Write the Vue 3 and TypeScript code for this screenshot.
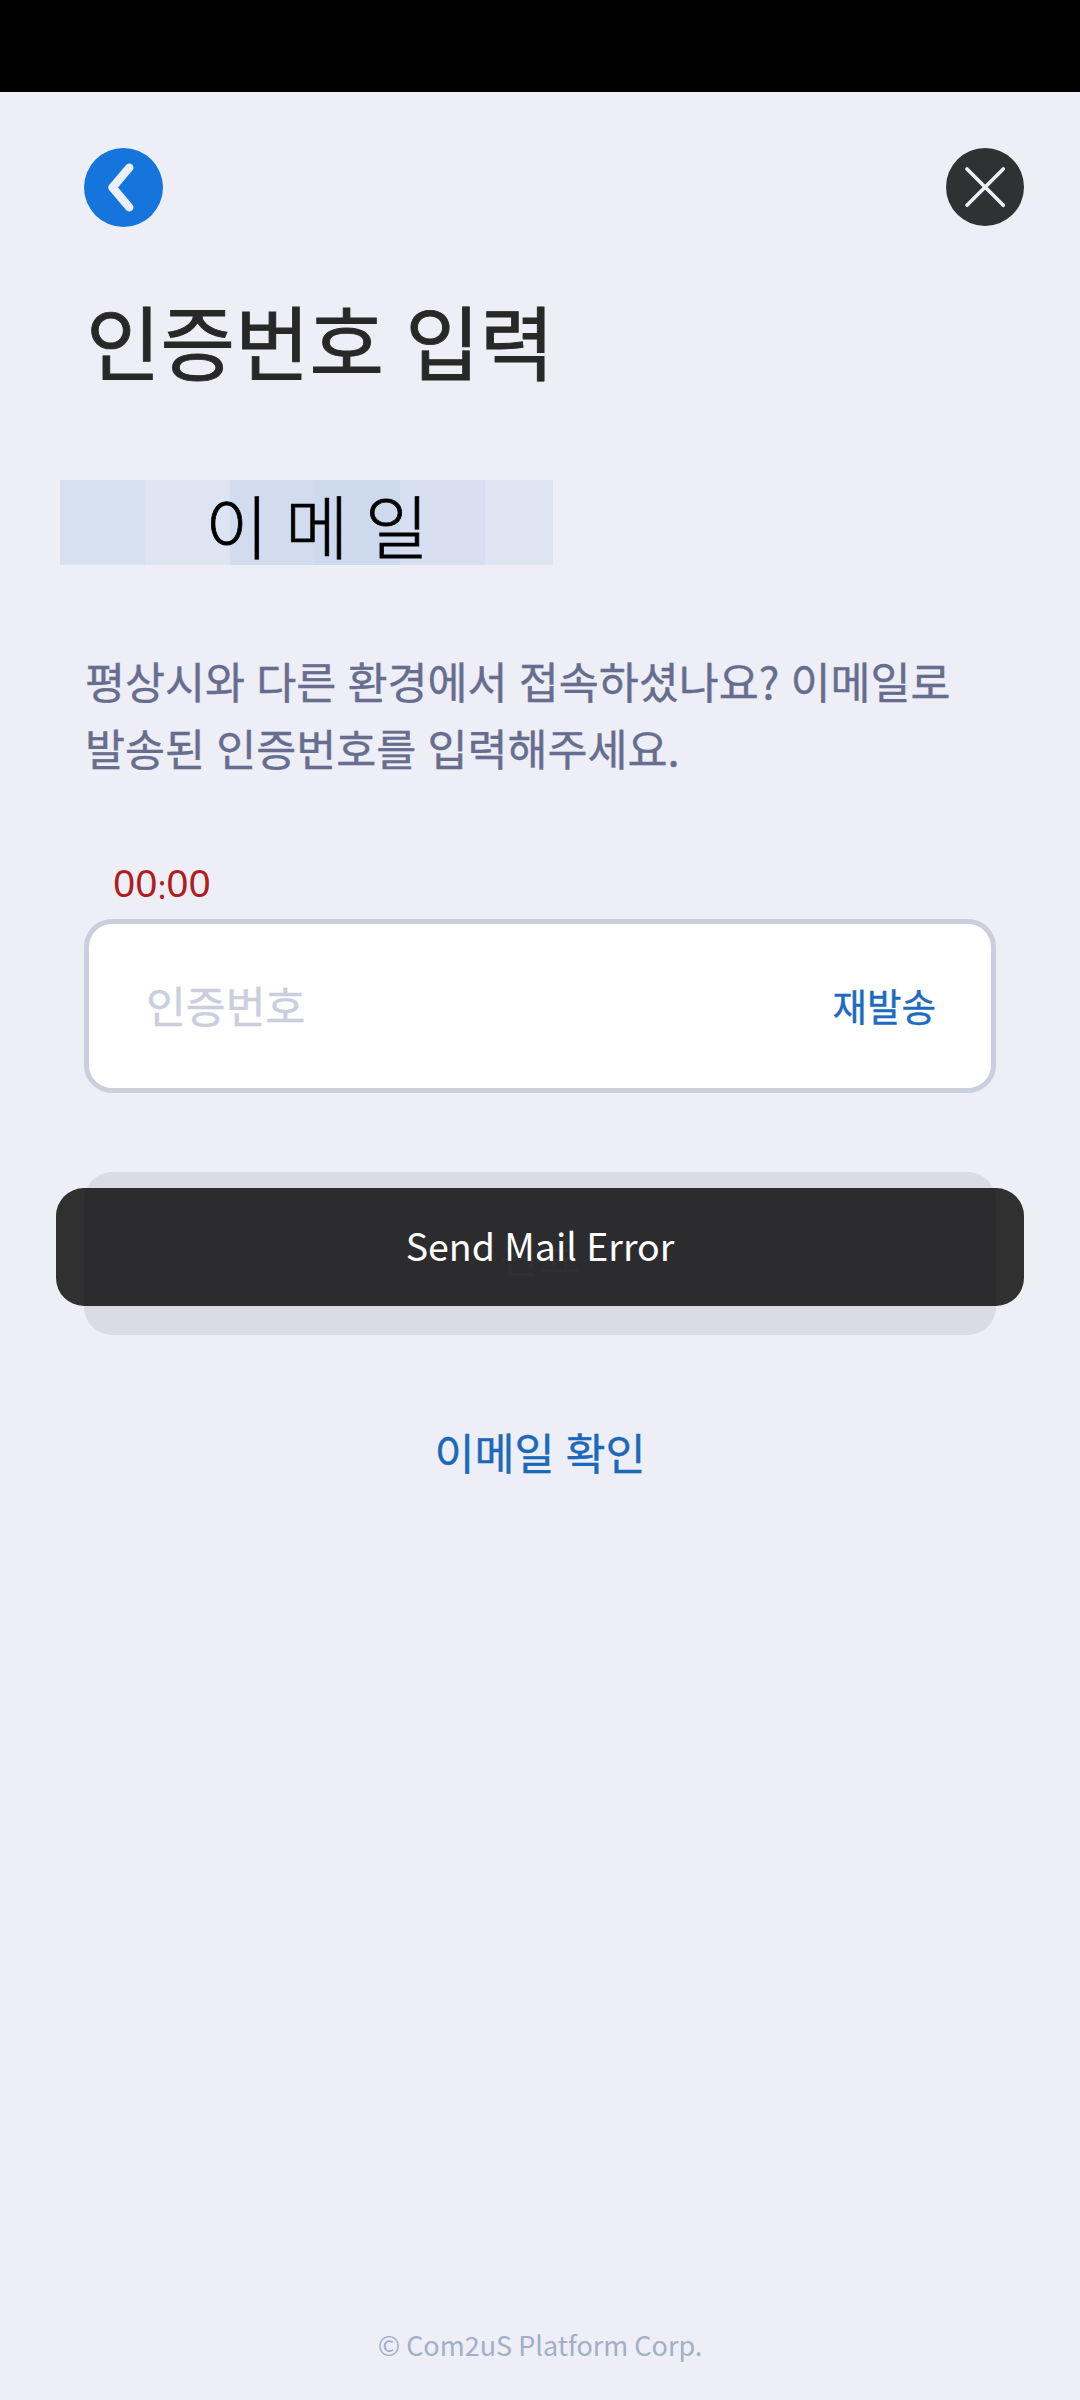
<script setup lang="ts">
import { ref } from 'vue'

const minutes = ref('00')
const seconds = ref('00')
const code = ref('')
const description = ['평상시와 다른 환경에서 접속하셨나요? 이메일로', '발송된 인증번호를 입력해주세요.']
const tiles = [
  { color: '#d8e1f1', width: 85 },
  { color: '#dee5f2', width: 85 },
  { color: '#d1ddee', width: 85 },
  { color: '#cddaed', width: 85 },
  { color: '#d7dff0', width: 85 },
  { color: '#dee5f2', width: 68 },
]
</script>

<template>
  <main class="screen">
    <div class="status-bar"></div>
    <header class="nav">
      <button class="icon-button" aria-label="뒤로">
        <svg width="79" height="79" viewBox="0 0 79 79">
          <circle cx="39.5" cy="39.5" r="39.5" fill="#1675dc" />
          <path d="M45.3 19.6 28.5 39.5 45.3 59.4" fill="none" stroke="#ebeff8" stroke-width="8.4" stroke-linecap="round" stroke-linejoin="round" />
        </svg>
      </button>
      <button class="icon-button" aria-label="닫기">
        <svg width="78" height="78" viewBox="0 0 78 78">
          <circle cx="39" cy="39" r="39" fill="#2f3132" />
          <path d="M21 21 57.3 57.3M57.3 21 21 57.3" fill="none" stroke="#edeef6" stroke-width="3.7" stroke-linecap="round" />
        </svg>
      </button>
    </header>

    <h1 class="title">인증번호 입력</h1>

    <div class="email">
      <div class="tiles">
        <span v-for="(tile, i) in tiles" :key="i" :style="{ width: tile.width + 'px', background: tile.color }"></span>
      </div>
      <span class="email-label">이메일</span>
    </div>

    <p class="description">
      <span v-for="line in description" :key="line">{{ line }}</span>
    </p>

    <div class="timer">{{ minutes }}<span class="colon">:</span>{{ seconds }}</div>

    <div class="field">
      <input v-model="code" class="code" placeholder="인증번호" />
      <button class="resend">재발송</button>
    </div>

    <div class="submit-area">
      <button class="submit">완료</button>
      <div class="toast">Send Mail Error</div>
    </div>

    <a class="check-mail">이메일 확인</a>
    <footer class="copyright">© Com2uS Platform Corp.</footer>
  </main>
</template>

<style>
body {
  margin: 0;
  background: #edeef6;
}
</style>

<style scoped>
.screen {
  box-sizing: border-box;
  width: 1080px;
  height: 2400px;
  display: flex;
  flex-direction: column;
  overflow: hidden;
  background: #edeef6;
  font-family: "Noto Sans CJK KR", sans-serif;
}
button {
  border: 0;
  padding: 0;
  background: none;
  font-family: inherit;
}
.status-bar {
  height: 92px;
  background: #000;
}
.nav {
  display: flex;
  justify-content: space-between;
  align-items: flex-start;
  height: 79px;
  padding: 56px 56px 0 84px;
}
.icon-button,
.icon-button svg {
  display: block;
}
.title {
  margin: 52px 0 0 86px;
  font-size: 81px;
  font-weight: 400;
  line-height: 120px;
  word-spacing: 3px;
  color: #282828;
  -webkit-text-stroke: 0.9px #282828;
}
.email {
  position: relative;
  width: 493px;
  height: 85px;
  margin: 81px 0 0 60px;
}
.tiles {
  display: flex;
  height: 100%;
}
.email-label {
  position: absolute;
  left: 145px;
  top: 2px;
  font-size: 69px;
  font-weight: 300;
  line-height: 85px;
  letter-spacing: 16.5px;
  white-space: nowrap;
  color: #000;
  -webkit-text-stroke: 0.8px #000;
}
.description {
  display: flex;
  flex-direction: column;
  margin: 82px 0 0 85px;
  font-size: 43.5px;
  line-height: 67px;
  word-spacing: 1.4px;
  white-space: nowrap;
  color: #666d8e;
  -webkit-text-stroke: 0.4px #666d8e;
}
.timer {
  margin: 71px 0 0 113px;
  height: 67px;
  font-family: "Noto Sans", sans-serif;
  font-size: 39px;
  line-height: 60px;
  color: #b01c20;
}
.colon {
  font-size: 32px;
  position: relative;
  top: 2px;
}
.field {
  box-sizing: border-box;
  display: flex;
  align-items: center;
  justify-content: space-between;
  width: 912px;
  height: 174px;
  margin-left: 84px;
  padding: 0 55px 0 57px;
  border: 5px solid #cccddd;
  border-radius: 28px;
  background: #fff;
}
.code {
  width: 500px;
  height: 80px;
  margin-bottom: 5px;
  padding: 0;
  border: 0;
  outline: 0;
  background: none;
  font-family: inherit;
  font-size: 43.3px;
}
.code::placeholder {
  color: #cccddd;
  opacity: 1;
  -webkit-text-stroke: 0.4px #cccddd;
}
.resend {
  margin-bottom: 3px;
  font-size: 37.5px;
  color: #1d6bc0;
  -webkit-text-stroke: 0.4px #1d6bc0;
}
.submit-area {
  position: relative;
  margin: 79px 56px 0;
  padding: 0 28px;
  height: 163px;
}
.submit {
  display: block;
  width: 912px;
  height: 163px;
  border-radius: 28px;
  background: #dbdbe3;
  font-size: 43px;
  color: #edeef6;
}
.toast {
  position: absolute;
  left: 0;
  top: 16px;
  box-sizing: border-box;
  width: 968px;
  height: 118px;
  border-radius: 28px;
  background: rgba(0, 0, 0, 0.8);
  font-size: 37.5px;
  line-height: 113px;
  word-spacing: 1px;
  text-align: center;
  color: #fff;
}
.check-mail {
  margin-top: 85px;
  font-size: 43.5px;
  line-height: 64px;
  word-spacing: 1.4px;
  text-align: center;
  color: #1c69b8;
  -webkit-text-stroke: 0.4px #1c69b8;
}
.copyright {
  margin: auto 0 35px;
  font-size: 27px;
  line-height: 40px;
  text-align: center;
  color: #a3aec9;
}
</style>
